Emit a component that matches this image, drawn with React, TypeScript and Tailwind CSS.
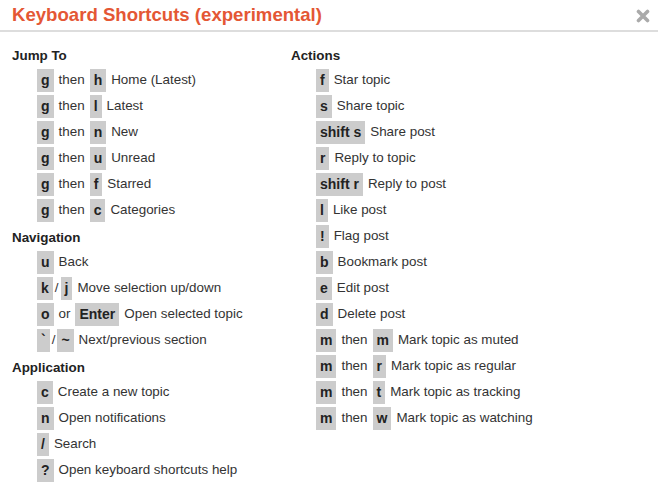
type Row = { keys: (string | { sep: string })[]; label: string };

const sep = (s: string) => ({ sep: s });

const left: { title: string; rows: Row[] }[] = [
  {
    title: "Jump To",
    rows: [
      { keys: ["g", sep("then"), "h"], label: "Home (Latest)" },
      { keys: ["g", sep("then"), "l"], label: "Latest" },
      { keys: ["g", sep("then"), "n"], label: "New" },
      { keys: ["g", sep("then"), "u"], label: "Unread" },
      { keys: ["g", sep("then"), "f"], label: "Starred" },
      { keys: ["g", sep("then"), "c"], label: "Categories" },
    ],
  },
  {
    title: "Navigation",
    rows: [
      { keys: ["u"], label: "Back" },
      { keys: ["k", sep("/"), "j"], label: "Move selection up/down" },
      { keys: ["o", sep("or"), "Enter"], label: "Open selected topic" },
      { keys: ["`", sep("/"), "~"], label: "Next/previous section" },
    ],
  },
  {
    title: "Application",
    rows: [
      { keys: ["c"], label: "Create a new topic" },
      { keys: ["n"], label: "Open notifications" },
      { keys: ["/"], label: "Search" },
      { keys: ["?"], label: "Open keyboard shortcuts help" },
    ],
  },
];

const right: { title: string; rows: Row[] }[] = [
  {
    title: "Actions",
    rows: [
      { keys: ["f"], label: "Star topic" },
      { keys: ["s"], label: "Share topic" },
      { keys: ["shift s"], label: "Share post" },
      { keys: ["r"], label: "Reply to topic" },
      { keys: ["shift r"], label: "Reply to post" },
      { keys: ["l"], label: "Like post" },
      { keys: ["!"], label: "Flag post" },
      { keys: ["b"], label: "Bookmark post" },
      { keys: ["e"], label: "Edit post" },
      { keys: ["d"], label: "Delete post" },
      { keys: ["m", sep("then"), "m"], label: "Mark topic as muted" },
      { keys: ["m", sep("then"), "r"], label: "Mark topic as regular" },
      { keys: ["m", sep("then"), "t"], label: "Mark topic as tracking" },
      { keys: ["m", sep("then"), "w"], label: "Mark topic as watching" },
    ],
  },
];

function Key({ k }: { k: string }) {
  return (
    <span className="inline-flex h-[23px] items-center bg-[#cccccc] px-1 text-[14px] font-bold text-[#222]">
      {k}
    </span>
  );
}

function Section({ title, rows }: { title: string; rows: Row[] }) {
  return (
    <div className="mb-[3px]">
      <h4 className="h-[23px] leading-[23px] font-bold text-[#222]">{title}</h4>
      <ul className="pl-[25px]">
        {rows.map((r, i) => (
          <li key={i} className="flex h-[26px] items-center">
            {r.keys.map((k, j) =>
              typeof k === "string" ? (
                <Key key={j} k={k} />
              ) : k.sep === "/" ? (
                <span key={j} className="mx-[2px] text-[#333]">
                  {k.sep}
                </span>
              ) : (
                <span key={j} className="mx-[5px] text-[#333]">
                  {k.sep}
                </span>
              )
            )}
            <span className="ml-[5px] text-[#333]">{r.label}</span>
          </li>
        ))}
      </ul>
    </div>
  );
}

export default function App() {
  return (
    <div className="h-[500px] w-[658px] overflow-hidden bg-white text-[13.4px] font-['Liberation_Sans',Arial,sans-serif]">
      <div className="flex h-[32px] items-center justify-between border-b-2 border-[#dddddd] pl-[12px] pr-[8px]">
        <h3 className="text-[18.6px] font-bold leading-none text-[#e45735]">
          Keyboard Shortcuts (experimental)
        </h3>
        <svg width="14" height="14" viewBox="0 0 14 14" className="mt-[2px]">
          <path d="M2.5 2.5 L11.5 11.5 M11.5 2.5 L2.5 11.5" stroke="#aaaaaa" strokeWidth="3.6" strokeLinecap="round" />
        </svg>
      </div>
      <div className="flex pt-[12px] pl-[12px]">
        <div className="w-[279px]">
          {left.map((s) => (
            <Section key={s.title} {...s} />
          ))}
        </div>
        <div>
          {right.map((s) => (
            <Section key={s.title} {...s} />
          ))}
        </div>
      </div>
    </div>
  );
}
